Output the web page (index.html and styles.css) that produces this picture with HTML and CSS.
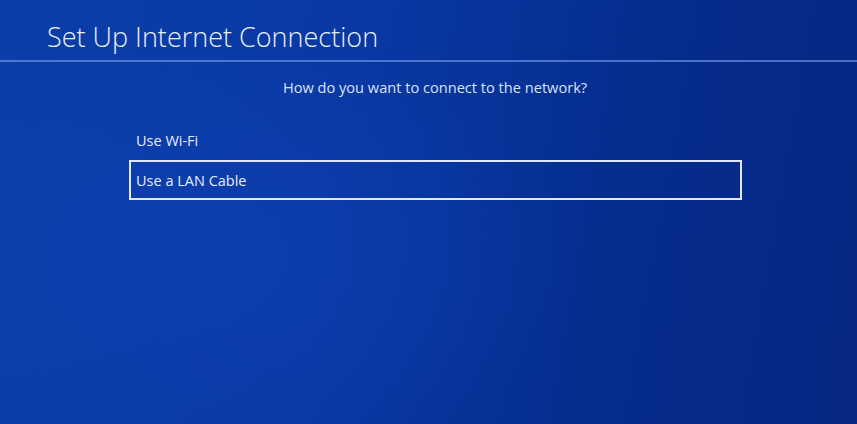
FILE: index.html
```html
<!DOCTYPE html>
<html>
<head>
<meta charset="utf-8">
<link rel="stylesheet" href="styles.css">
</head>
<body>
<div class="screen">
  <header class="header">
    <h1 class="title">Set Up Internet Connection</h1>
  </header>
  <p class="question">How do you want to connect to the network?</p>
  <ul class="options">
    <li class="option">Use Wi-Fi</li>
    <li class="option selected">Use a LAN Cable</li>
  </ul>
</div>
</body>
</html>
```
FILE: styles.css
```css
html, body {
  margin: 0;
  padding: 0;
  width: 857px;
  height: 424px;
  overflow: hidden;
}
.screen {
  width: 857px;
  height: 424px;
  box-sizing: border-box;
  font-family: "Open Sans", "Liberation Sans", sans-serif;
  color: #e4ecff;
  background:
    radial-gradient(ellipse 500px 300px at 230px 260px, rgba(20, 70, 190, 0.4), rgba(20,70,190,0) 70%),
    linear-gradient(100deg, #0c3ea8 0%, #0938a3 40%, #052b8c 75%, #062783 100%);
}
.header {
  height: 60px;
  border-bottom: 2px solid rgba(110, 150, 230, 0.65);
  display: flex;
  align-items: flex-end;
  padding-left: 47px;
}
.title {
  margin: 0 0 5px 0;
  font-size: 27px;
  font-weight: 300;
  color: #e8efff;
}
.question {
  margin: 15px 0 0 0;
  padding-left: 13px;
  text-align: center;
  font-size: 14.6px;
  font-weight: 400;
  color: #d8e2f8;
}
.options {
  list-style: none;
  margin: 23px 0 0 129px;
  padding: 0;
  width: 613px;
}
.option {
  box-sizing: border-box;
  height: 40px;
  display: flex;
  align-items: center;
  padding-left: 7px;
  font-size: 14.5px;
  color: #e4ecff;
}
.option.selected {
  border: 2px solid #dfe8ff;
  padding-left: 5px;
}
```
